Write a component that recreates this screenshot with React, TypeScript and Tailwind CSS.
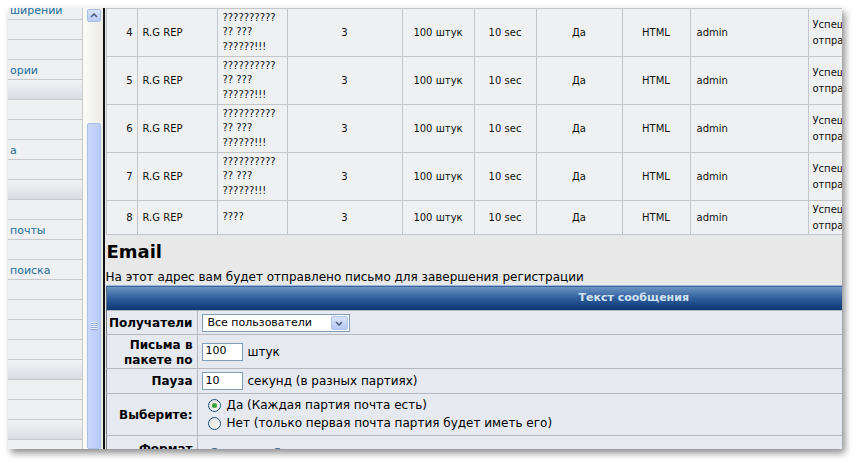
import React from "react";

const FONT = { fontFamily: '"DejaVu Sans", Verdana, sans-serif' };

const sideRows = [
  { t: "ширении" }, {}, {}, { t: "ории" }, { g: true }, {}, {}, { t: "а" }, {}, { g: true },
  {}, { t: "почты" }, {}, { t: "поиска" }, {}, {}, {}, {}, { g: true }, {}, {}, { g: true }, {},
] as { t?: string; g?: boolean }[];

const rows = [
  { n: 4, msg: ["??????????", "?? ???", "??????!!!"] },
  { n: 5, msg: ["??????????", "?? ???", "??????!!!"] },
  { n: 6, msg: ["??????????", "?? ???", "??????!!!"] },
  { n: 7, msg: ["??????????", "?? ???", "??????!!!"] },
  { n: 8, msg: ["????"] },
];

const colW = [31, 80, 70, 115, 72, 62, 86, 68, 118, 80];

function Radio({ checked }: { checked?: boolean }) {
  return (
    <span className="inline-flex w-[13px] h-[13px] rounded-full border border-[#1d5281] bg-gradient-to-br from-[#dcdcd6] to-white items-center justify-center shrink-0">
      {checked && <span className="w-[5px] h-[5px] rounded-full bg-[#3fa03a]" />}
    </span>
  );
}

function TextBox({ value }: { value: string }) {
  return (
    <span className="inline-flex items-center w-[41px] h-[18px] bg-white border border-[#7f9db9] px-[3px] text-[11px] text-black">
      {value}
    </span>
  );
}

export default function App() {
  return (
    <div className="w-[857px] h-[463px] bg-white pt-[8px] pl-[8px] overflow-hidden" style={FONT}>
      <div className="w-[834px] h-[441px] flex overflow-hidden bg-[#f2f2f2] shadow-[3px_4px_7px_rgba(0,0,0,0.45)]">
        {/* sidebar */}
        <div className="w-[75px] shrink-0 border-r border-[#c6c8ca] -mt-[8px]">
          {sideRows.map((r, i) => (
            <div
              key={i}
              className={`h-[20px] border-b border-[#c6c8ca] flex items-center pt-[3px] pl-[2px] text-[11px] text-[#1d6f9c] ${
                r.g ? "bg-gradient-to-b from-[#f2f3f5] to-[#d9dde3]" : "bg-[#eef0f2]"
              }`}
            >
              {r.t}
            </div>
          ))}
        </div>

        {/* scrollbar */}
        <div className="w-[20px] shrink-0 bg-gradient-to-r from-[#fbfbf8] to-[#ecebe5] pl-[4px] flex flex-col">
          <div className="mt-px w-[14px] h-[13px] rounded-[2px] bg-gradient-to-b from-[#d6e2fc] to-[#b9cbf6] border border-[#a9bde9] flex items-center justify-center">
            <svg width="8" height="5" viewBox="0 0 8 5">
              <path d="M1 4 L4 1 L7 4" fill="none" stroke="#4d6185" strokeWidth="1.6" />
            </svg>
          </div>
          <div className="mt-[101px] w-[14px] flex-1 rounded-[2px] bg-gradient-to-r from-[#c9d8fc] to-[#b8cbf8] border border-[#aebfe9] flex flex-col items-center">
            <div className="mt-[198px] flex flex-col gap-[1px]">
              {[0, 1, 2, 3].map((i) => (
                <div key={i} className="w-[6px] h-px bg-[#eef3ff] shadow-[0_1px_0_#8fa6d8]" />
              ))}
            </div>
          </div>
        </div>

        <div className="w-[1.5px] shrink-0 bg-[#111]" />

        {/* main */}
        <div className="flex-1 overflow-hidden bg-[#e8e8e8] pl-px">
          <table className="table-fixed border-collapse w-[782px] text-[10px] text-[#111]">
            <colgroup>
              {colW.map((w, i) => (
                <col key={i} style={{ width: w }} />
              ))}
            </colgroup>
            <tbody>
              {rows.map((r) => (
                <tr key={r.n} className={r.n === 8 ? "h-[34px]" : "h-[48px]"}>
                  <td className="border border-[#c2c6ca] bg-[#eef0f2] text-right pr-[4px]">{r.n}</td>
                  <td className="border border-[#c2c6ca] bg-[#eef0f2] pl-[5px]">R.G REP</td>
                  <td className="border border-[#c2c6ca] bg-[#eef0f2] pl-[5px] leading-[14.5px]">
                    {r.msg.map((m, i) => (
                      <div key={i}>{m}</div>
                    ))}
                  </td>
                  <td className="border border-[#c2c6ca] bg-[#eef0f2] text-center">3</td>
                  <td className="border border-[#c2c6ca] bg-[#eef0f2] text-center">100 штук</td>
                  <td className="border border-[#c2c6ca] bg-[#eef0f2] text-center">10 sec</td>
                  <td className="border border-[#c2c6ca] bg-[#eef0f2] text-center">Да</td>
                  <td className="border border-[#c2c6ca] bg-[#eef0f2] text-center">HTML</td>
                  <td className="border border-[#c2c6ca] bg-[#eef0f2] pl-[6px]">admin</td>
                  <td className="border border-[#c2c6ca] bg-[#eef0f2] pl-[4px] text-[10px] leading-[16px] whitespace-nowrap">
                    <div>Успешно</div>
                    <div>отправлено</div>
                  </td>
                </tr>
              ))}
            </tbody>
          </table>

          <h2 className="mt-[6px] pl-[1px] text-[18px] font-bold leading-[22px] text-black">Email</h2>
          <p className="mt-[7px] text-[12px] leading-[15px] text-black whitespace-nowrap">
            На этот адрес вам будет отправлено письмо для завершения регистрации
          </p>

          <table className="table-fixed border-collapse w-[1056px] text-[12px] text-black">
            <colgroup>
              <col style={{ width: 91 }} />
              <col />
            </colgroup>
            <thead>
              <tr className="h-[25px]">
                <th
                  colSpan={2}
                  className="bg-gradient-to-b from-[#6f97c6] via-[#2d5d9b] to-[#0a3671] border-l border-[#5a6a80] border-t border-t-[#9bb8dc] text-[11px] font-bold text-[#d3e3f5] text-center"
                >
                  Текст сообщения
                </th>
              </tr>
            </thead>
            <tbody>
              <tr className="h-[24px]">
                <td className="border border-[#b5b9be] border-l-[#7d8288] bg-[#e6e9ef] text-right pr-[4px] font-bold">Получатели</td>
                <td className="border border-[#b5b9be] bg-[#e6e9ef] pl-[4px]">
                  <span className="inline-flex items-center w-[148px] h-[18px] bg-white border border-[#7f9db9] text-[11px]">
                    <span className="flex-1 pl-[5px]">Все пользователи</span>
                    <span className="w-[17px] h-[14px] mr-px rounded-[2px] bg-gradient-to-b from-[#d9e4fb] to-[#b6c9f3] border border-[#b0c2e8] flex items-center justify-center">
                      <svg width="8" height="5" viewBox="0 0 8 5">
                        <path d="M1 1 L4 4 L7 1" fill="none" stroke="#4d6185" strokeWidth="1.6" />
                      </svg>
                    </span>
                  </span>
                </td>
              </tr>
              <tr className="h-[34px]">
                <td className="border border-[#b5b9be] border-l-[#7d8288] bg-[#e6e9ef] text-right pr-[4px] pt-[3px] font-bold leading-[15px]">
                  Письма в
                  <br />
                  пакете по
                </td>
                <td className="border border-[#b5b9be] bg-[#e6e9ef] pl-[4px]">
                  <div className="flex items-center gap-[5px]">
                    <TextBox value="100" />
                    <span>штук</span>
                  </div>
                </td>
              </tr>
              <tr className="h-[25px]">
                <td className="border border-[#b5b9be] border-l-[#7d8288] bg-[#e6e9ef] text-right pr-[4px] font-bold">Пауза</td>
                <td className="border border-[#b5b9be] bg-[#e6e9ef] pl-[4px]">
                  <div className="flex items-center gap-[5px]">
                    <TextBox value="10" />
                    <span>секунд (в разных партиях)</span>
                  </div>
                </td>
              </tr>
              <tr className="h-[42px]">
                <td className="border border-[#b5b9be] border-l-[#7d8288] bg-[#e6e9ef] text-right pr-[4px] font-bold">Выберите:</td>
                <td className="border border-[#b5b9be] bg-[#e6e9ef] pl-[10px]">
                  <div className="flex flex-col gap-[3px]">
                    <label className="flex items-center gap-[6px] leading-[15px]">
                      <Radio checked />
                      Да (Каждая партия почта есть)
                    </label>
                    <label className="flex items-center gap-[6px] leading-[15px]">
                      <Radio />
                      Нет (только первая почта партия будет иметь его)
                    </label>
                  </div>
                </td>
              </tr>
              <tr className="h-[30px]">
                <td className="border border-[#b5b9be] border-l-[#7d8288] bg-[#e6e9ef] text-right pr-[4px] font-bold align-top pt-[4px]">Формат</td>
                <td className="border border-[#b5b9be] bg-[#e6e9ef] pl-[10px] align-top pt-[12px]">
                  <div className="flex items-center gap-[50px]">
                    <Radio />
                    <Radio />
                  </div>
                </td>
              </tr>
            </tbody>
          </table>
        </div>
      </div>
    </div>
  );
}
